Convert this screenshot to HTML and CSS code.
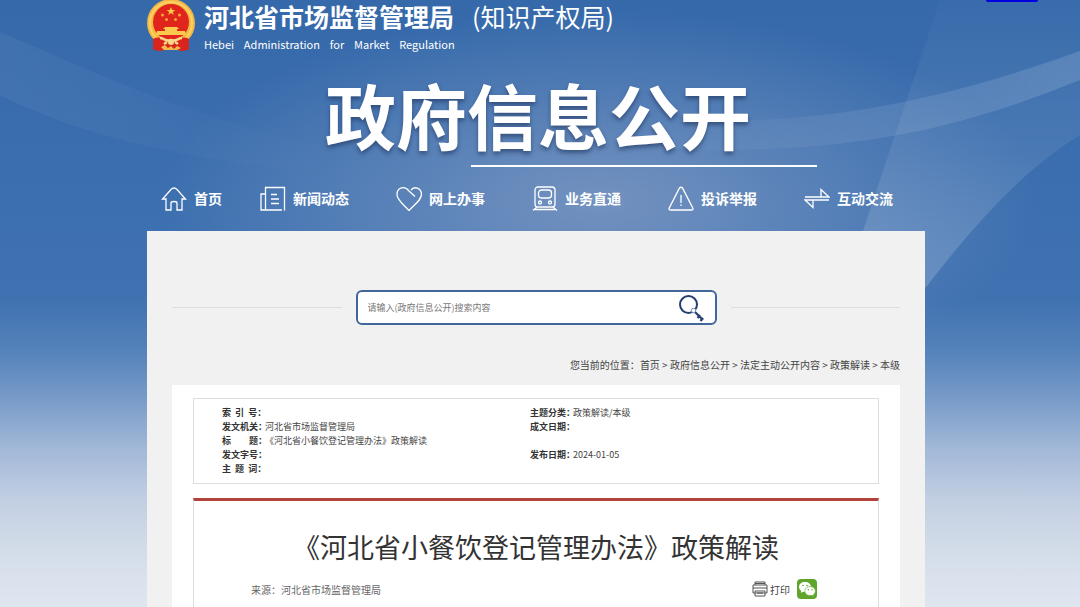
FILE: index.html
```html
<!DOCTYPE html>
<html lang="zh-CN">
<head>
    <meta charset="UTF-8">
    <meta name="viewport" content="width=device-width, initial-scale=1.0">
    <title>《河北省小餐饮登记管理办法》政策解读</title>
    <link rel="stylesheet" href="styles.css">
</head>
<body>
    <!-- light streaks behind the header -->
    <svg class="page-bg" viewBox="0 0 1080 320" preserveAspectRatio="none" aria-hidden="true">
        <defs>
            <linearGradient id="beam" x1="0" y1="0" x2="0" y2="1">
                <stop offset="0" stop-color="#fff" stop-opacity="0.02"/>
                <stop offset="0.5" stop-color="#fff" stop-opacity="0.08"/>
                <stop offset="1" stop-color="#fff" stop-opacity="0.2"/>
            </linearGradient>
            <linearGradient id="band" x1="0" y1="0" x2="1" y2="0">
                <stop offset="0" stop-color="#fff" stop-opacity="0"/>
                <stop offset="0.5" stop-color="#fff" stop-opacity="0.08"/>
                <stop offset="1" stop-color="#fff" stop-opacity="0.14"/>
            </linearGradient>
            <linearGradient id="bandLeft" x1="0" y1="0" x2="1" y2="0">
                <stop offset="0" stop-color="#fff" stop-opacity="0.05"/>
                <stop offset="1" stop-color="#fff" stop-opacity="0"/>
            </linearGradient>
        </defs>
        <path fill="url(#beam)" d="M940 0L1080 0L1080 135C1020 172 970 230 927 286L900 310L840 300Z"/>
        <path fill="url(#band)" d="M640 118C800 130 930 105 1080 51L1080 80C960 128 850 158 640 148Z"/>
        <path fill="url(#bandLeft)" d="M0 32C90 70 190 120 340 150L340 175C180 160 80 135 0 95Z"/>
    </svg>
    <a class="top-link" href="#main" aria-label="跳转到正文"></a>

    <div class="container">
        <header>
            <div class="logo">
                <svg class="emblem" viewBox="0 0 48 52" aria-hidden="true">
                    <path fill="#d9251d" d="M7 36L41 36L42 49L34 51L24 47L14 51L6 49Z"/>
                    <circle cx="24" cy="23" r="24" fill="#f4b942"/>
                    <circle cx="24" cy="23" r="21" fill="none" stroke="#fbd264" stroke-width="2"/>
                    <circle cx="24" cy="22" r="18" fill="#e0261c"/>
                    <path fill="#f9c846" d="M24 7l1.200 3h3.200l-2.600 2 1 3-2.800-1.900-2.800 1.900 1-3-2.600-2h3.200z"/>
                    <g fill="#f9a53c">
                        <circle cx="15.500" cy="15" r="1.500"/>
                        <circle cx="19.500" cy="19.500" r="1.500"/>
                        <circle cx="28.500" cy="19.500" r="1.500"/>
                        <circle cx="32.500" cy="15" r="1.500"/>
                    </g>
                    <path fill="#fbc94d" d="M18 27h12l2 2h-2v2h8l1 4H9l1-4h8v-2h-2z"/>
                    <path fill="#d9251d" d="M6 39C10 37 14 37 17 40L31 40C34 37 38 37 42 39L41 50L34 51L30 48L18 48L14 51L7 50Z"/>
                    <path fill="none" stroke="#fbd78a" stroke-width="2.500" d="M13 38C17 38 19 42 24 40C29 42 31 38 35 38M17 44L20 42M31 44L28 42"/>
                    <circle cx="24" cy="42" r="3" fill="#fbd78a"/>
                    <path fill="#f7b84a" d="M14 47l4-2 3 3 3-2 3 3 3-3 4 2-4 2H17z"/>
                </svg>
                <div class="logo-text">
                    <p class="site-name"><strong>河北省市场监督管理局</strong><span>(知识产权局)</span></p>
                    <p class="site-name-en">Hebei&nbsp; &nbsp; Administration&nbsp; &nbsp; for&nbsp; &nbsp; Market&nbsp; &nbsp; Regulation</p>
                </div>
            </div>
            <p class="banner">政府信息公开</p>
            <nav>
                <ul>
                    <li><a href="#">
                        <svg viewBox="0 -1 26 26"><path d="M5 13H1.500L10 3.500Q13 .5 16 3.500L24.500 13H21V24H16V17Q16 15.500 13 15.500T10 17V24H5Z"/></svg>
                        首页</a></li>
                    <li><a href="#">
                        <svg viewBox="0 -1 26 26"><path d="M5.500 24V1.500H24.500V24.500M22 24H1V8H5.500M11 8.500H17M11 13H19M11 17.500H19"/></svg>
                        新闻动态</a></li>
                    <li><a href="#">
                        <svg viewBox="0 -1 26 26"><path d="M19 10.500L13 5C9-.5 1 1 1 8.500C1 14 7 18 13 24.500C19 18 25.500 14 25.500 8C25 1.500 18 0 15 4"/></svg>
                        网上办事</a></li>
                    <li><a href="#">
                        <svg viewBox="0 -1 26 26"><rect x="3" y="1" width="20" height="20" rx="3"/><rect x="6.500" y="4" width="13" height="8" rx="3"/><circle cx="8" cy="16.500" r="1.500"/><circle cx="18" cy="16.500" r="1.500"/><path d="M5 21L1 24.500M21 21L25 24.500M3 23.500H23"/></svg>
                        业务直通</a></li>
                    <li><a href="#">
                        <svg viewBox="0 -1 26 26"><path d="M11.500 2Q13 .5 14.500 2L25 22.500Q25 24 24 24H2Q1 24 1 22.500ZM13 9V17M13 18.500V20"/></svg>
                        投诉举报</a></li>
                    <li><a href="#">
                        <svg viewBox="0 -1 26 26"><path d="M1 11H25L17 3.500V11M25 14H1L9 21.500V14"/></svg>
                        互动交流</a></li>
                </ul>
            </nav>
        </header>

        <main id="main">
            <div class="search-row">
                <form class="search-box">
                    <input type="text" placeholder="请输入(政府信息公开)搜索内容" aria-label="搜索内容">
                    <button type="submit" aria-label="搜索">
                        <svg viewBox="0 0 28 28">
                            <circle cx="11.500" cy="10.500" r="8.500" fill="none" stroke="#243f70" stroke-width="2"/>
                            <path fill="none" stroke="#243f70" stroke-width="2.200" d="M16 16L26 26M20.500 24L23 21M23.500 27L26 24"/>
                            <circle cx="16.500" cy="16.500" r="2.200" fill="#fff" stroke="#6f88b2"/>
                        </svg>
                    </button>
                </form>
            </div>

            <div class="breadcrumb">您当前的位置：<a href="#">首页</a> &gt; <a href="#">政府信息公开</a> &gt; <a href="#">法定主动公开内容</a> &gt; <a href="#">政策解读</a> &gt; <a href="#">本级</a></div>

            <div class="content">
                <div class="meta">
                    <table>
                        <tr>
                            <th scope="row">索&nbsp;&nbsp;引&nbsp;&nbsp;号：</th><td></td>
                            <th scope="row">主题分类：</th><td>政策解读/本级</td>
                        </tr>
                        <tr>
                            <th scope="row">发文机关：</th><td>河北省市场监督管理局</td>
                            <th scope="row">成文日期：</th><td></td>
                        </tr>
                        <tr>
                            <th scope="row">标　　题：</th><td colspan="3">《河北省小餐饮登记管理办法》政策解读</td>
                        </tr>
                        <tr>
                            <th scope="row">发文字号：</th><td></td>
                            <th scope="row">发布日期：</th><td>2024-01-05</td>
                        </tr>
                        <tr>
                            <th scope="row">主&nbsp;&nbsp;题&nbsp;&nbsp;词：</th><td colspan="3"></td>
                        </tr>
                    </table>
                </div>

                <article>
                    <h1>《河北省小餐饮登记管理办法》政策解读</h1>
                    <div class="article-info">
                        <span class="source">来源：河北省市场监督管理局</span>
                        <button type="button" class="print-button">
                            <svg viewBox="0 0 16 16"><path d="M3 4V1H13V4M1 4H15V12H1ZM1 7H15M3 10V15H13V10H3M5 12H11M3 2.500H13"/></svg>
                            打印
                        </button>
                        <a class="wechat" href="#" aria-label="分享到微信">
                            <svg viewBox="0 0 20 20">
                                <path fill="#fff" d="M8 3C4.500 3 2 5 2 8C2 9.700 3 11 4.300 12L3.800 14L6 12.800Q7 13 8 13C11.500 13 14 11 14 8S11.500 3 8 3Z"/>
                                <path fill="#fff" stroke="#5fa52c" stroke-width=".6" d="M13 7.500C10 7.500 7.800 9.500 7.800 12S10 16.500 13 16.500Q14 16.500 15 16.200L17 17.300L16.500 15.500C17.700 14.600 18.400 13.500 18.400 12C18.400 9.500 16 7.500 13 7.500Z"/>
                                <g fill="#5fa52c"><circle cx="6" cy="6.500" r=".8"/><circle cx="10" cy="6.500" r=".8"/><circle cx="11.300" cy="10.800" r=".7"/><circle cx="15" cy="10.800" r=".7"/></g>
                            </svg>
                        </a>
                    </div>
                </article>
            </div>
        </main>
    </div>
</body>
</html>
```
FILE: styles.css
```css
* {
    box-sizing: border-box;
}
html {
    min-height: 100%;
    background: radial-gradient(ellipse 440px 190px at 600px 200px, rgba(160, 175, 205, 0.55), rgba(160, 175, 205, 0)), linear-gradient(#3569aa 0, #3d70b0 230px, #4072b1 300px, #5482ba 350px, #799cc9 400px, #a3b9d8 450px, #c2cfe2 500px, #d3dde9 550px, #dfe6f0 607px);
    background-repeat: no-repeat;
    background-color: #dfe6f0;
}
body {
    margin: 0;
    padding-right: 8px;
    font-family: "Noto Sans CJK SC", sans-serif;
    color: #444;
    font-size: 10px;
}
p, h1, ul {
    margin: 0;
    padding: 0;
}
a {
    color: inherit;
    text-decoration: none;
}
button {
    background: none;
    border: none;
    padding: 0;
    color: inherit;
    font-family: inherit;
    cursor: pointer;
}
.page-bg {
    position: absolute;
    top: 0;
    left: 0;
    width: 100%;
    height: 320px;
    z-index: -1;
}
.top-link {
    position: absolute;
    top: 0;
    right: 42px;
    width: 52px;
    height: 2px;
    background: #0000e0;
    border-radius: 0 0 4px 4px;
}
.container {
    max-width: 778px;
    margin: 0 auto;
}

/* header */
header {
    color: white;
}
.logo {
    display: flex;
    gap: 9px;
}
.emblem {
    width: 48px;
    height: 52px;
}
.site-name {
    display: flex;
    gap: 18px;
    font-size: 25px;
    line-height: 32px;
}
.site-name span {
    font-weight: normal;
}
.site-name-en {
    font-size: 11px;
    line-height: 24px;
}
.banner {
    width: 346px;
    margin: 7px 0 0 324px;
    padding-bottom: 2px;
    border-bottom: 2px solid white;
    display: flex;
    justify-content: flex-end;
    padding-right: 66px;
    font-size: 71px;
    line-height: 100px;
    font-weight: bold;
    white-space: nowrap;
    text-shadow: 0 3px 4px rgba(30, 50, 90, 0.6);
}
nav ul {
    display: flex;
    list-style: none;
    padding: 18px 0 20px 14px;
}
nav li {
    flex: none;
    width: 136px;
}
nav li:first-child {
    width: 99px;
}
nav a {
    display: flex;
    align-items: center;
    gap: 7px;
    font-size: 14px;
    line-height: 26px;
    font-weight: bold;
    white-space: nowrap;
}
nav svg {
    width: 26px;
    height: 26px;
    fill: none;
    stroke: white;
    stroke-width: 1.3;
}

/* main panel */
main {
    background: #f1f1f1;
    padding: 59px 25px 0;
}
.search-row {
    display: flex;
    align-items: center;
    gap: 14px;
}
.search-row::before,
.search-row::after {
    content: "";
    flex: 1;
    height: 1px;
    background: #ddd;
}
.search-box {
    display: flex;
    align-items: center;
    width: 361px;
    height: 35px;
    padding: 0 10px;
    background: white;
    border: 2px solid #41679a;
    border-radius: 6px;
}
.search-box input {
    flex: 1;
    padding: 0;
    border: none;
    outline: none;
    background: none;
    font-family: inherit;
    font-size: 9px;
    color: #444;
}
.search-box input::placeholder {
    color: #777;
}
.search-box button,
.search-box svg {
    display: block;
    width: 28px;
    height: 28px;
}
.breadcrumb {
    padding: 30px 0 10px;
    line-height: 20px;
    text-align: right;
}
.content {
    padding: 13px 21px 0;
    background: white;
}
.meta {
    padding: 7px 28px;
    border: 1px solid #ddd;
}
.meta table {
    width: 100%;
    table-layout: fixed;
    border-collapse: collapse;
    font-size: 9px;
    line-height: 14px;
}
.meta th,
.meta td {
    height: 14px;
    padding: 0;
    text-align: left;
    white-space: nowrap;
}
.meta th {
    width: 43px;
    color: #333;
}
.meta td:nth-child(2) {
    width: 265px;
}
article {
    margin-top: 14px;
    padding-bottom: 10px;
    border: 1px solid #ddd;
    border-top: 3px solid #b3423a;
}
article h1 {
    padding-top: 26px;
    font-size: 27px;
    line-height: 40px;
    font-weight: normal;
    color: #333;
    text-align: center;
}
.article-info {
    display: flex;
    align-items: center;
    padding: 12px 61px 0 57px;
}
.source {
    flex: 1;
    color: #666;
}
.print-button {
    display: flex;
    align-items: center;
    gap: 2px;
    margin-right: 7px;
    font-size: 10px;
}
.print-button svg {
    width: 16px;
    height: 16px;
    fill: none;
    stroke: #555;
}
.wechat {
    width: 20px;
    height: 20px;
    background: #5fa52c;
    border-radius: 4px;
}
.wechat svg {
    display: block;
}
```
